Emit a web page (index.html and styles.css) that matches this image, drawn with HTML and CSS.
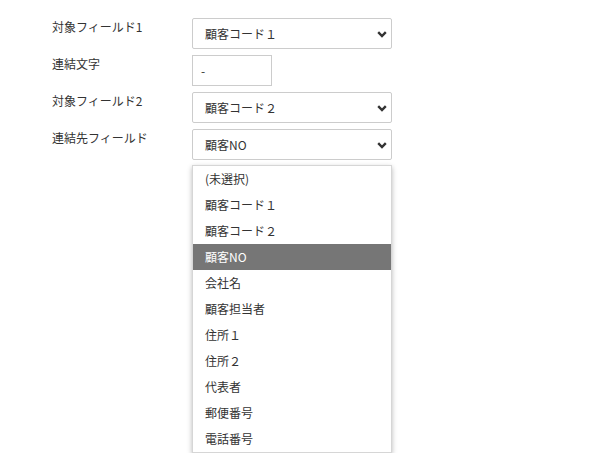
FILE: index.html
```html
<!DOCTYPE html>
<html lang="ja">
<head>
<meta charset="utf-8">
<link rel="stylesheet" href="styles.css">
</head>
<body>
<div class="form">
  <div class="row">
    <div class="label">対象フィールド1</div>
    <div class="select"><span class="value">顧客コード１</span><svg class="chev" width="10" height="7" viewBox="0 0 10 7"><path d="M1.2 1.2 L5 5 L8.8 1.2" fill="none" stroke="#333" stroke-width="2.4"/></svg></div>
  </div>
  <div class="row">
    <div class="label">連結文字</div>
    <div class="input">-</div>
  </div>
  <div class="row">
    <div class="label">対象フィールド2</div>
    <div class="select"><span class="value">顧客コード２</span><svg class="chev" width="10" height="7" viewBox="0 0 10 7"><path d="M1.2 1.2 L5 5 L8.8 1.2" fill="none" stroke="#333" stroke-width="2.4"/></svg></div>
  </div>
  <div class="row">
    <div class="label">連結先フィールド</div>
    <div class="control">
      <div class="select"><span class="value">顧客NO</span><svg class="chev" width="10" height="7" viewBox="0 0 10 7"><path d="M1.2 1.2 L5 5 L8.8 1.2" fill="none" stroke="#333" stroke-width="2.4"/></svg></div>
      <div class="options">
        <div class="opt">(未選択)</div>
        <div class="opt">顧客コード１</div>
        <div class="opt">顧客コード２</div>
        <div class="opt active">顧客NO</div>
        <div class="opt">会社名</div>
        <div class="opt">顧客担当者</div>
        <div class="opt">住所１</div>
        <div class="opt">住所２</div>
        <div class="opt">代表者</div>
        <div class="opt">郵便番号</div>
        <div class="opt">電話番号</div>
      </div>
    </div>
  </div>
</div>
</body>
</html>
```
FILE: styles.css
```css
html, body {
  margin: 0;
  padding: 0;
  background: #fff;
}
body {
  font-family: "Noto Sans CJK JP", "Noto Sans", sans-serif;
  font-size: 12px;
  color: #333;
}
.form {
  padding: 18px 0 0 52px;
  display: flex;
  flex-direction: column;
  gap: 6px;
}
.row {
  display: flex;
  align-items: flex-start;
}
.label {
  width: 140px;
  line-height: 17px;
}
.control {
  display: flex;
  flex-direction: column;
  gap: 5px;
}
.select {
  box-sizing: border-box;
  width: 200px;
  height: 31px;
  border: 1px solid #ccc;
  border-radius: 2px;
  display: flex;
  align-items: center;
  justify-content: space-between;
  padding: 0 4px 0 12px;
  line-height: 17px;
}
.chev {
  margin-top: 1px;
}
.input {
  box-sizing: border-box;
  width: 80px;
  height: 31px;
  border: 1px solid #ccc;
  padding: 0 8px;
  display: flex;
  align-items: center;
}
.options {
  width: 200px;
  box-sizing: border-box;
  background: #fff;
  border: 1px solid #d6d6d6;
  box-shadow: 0 2px 5px rgba(0, 0, 0, 0.28);
}
.opt {
  height: 26px;
  line-height: 26px;
  padding-left: 12px;
}
.opt.active {
  background: #767676;
  color: #fff;
}
```
